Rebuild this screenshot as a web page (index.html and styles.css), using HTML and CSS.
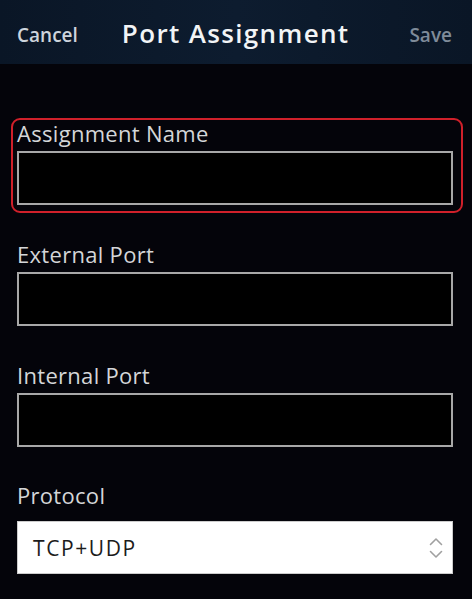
FILE: index.html
```html
<!DOCTYPE html>
<html>
<head>
<meta charset="utf-8">
<link rel="stylesheet" href="styles.css">
</head>
<body>
<header class="topbar">
  <span class="nav-btn cancel">Cancel</span>
  <h1 class="title">Port Assignment</h1>
  <span class="nav-btn save">Save</span>
</header>
<main class="form">
  <div class="field field-focus">
    <label class="label">Assignment Name</label>
    <div class="input"></div>
  </div>
  <div class="field">
    <label class="label">External Port</label>
    <div class="input"></div>
  </div>
  <div class="field">
    <label class="label">Internal Port</label>
    <div class="input"></div>
  </div>
  <div class="field field-select">
    <label class="label">Protocol</label>
    <div class="select">
      <span class="select-value">TCP+UDP</span>
      <svg class="chevrons" width="14" height="24" viewBox="0 0 14 24">
        <path d="M1.5 8.5 L7 3 L12.5 8.5" fill="none" stroke="#a0a0a0" stroke-width="1.6" stroke-linecap="round" stroke-linejoin="round"/>
        <path d="M1.5 15.5 L7 21 L12.5 15.5" fill="none" stroke="#a0a0a0" stroke-width="1.6" stroke-linecap="round" stroke-linejoin="round"/>
      </svg>
    </div>
  </div>
</main>
</body>
</html>
```

FILE: styles.css
```css
html, body {
  margin: 0;
  padding: 0;
  background: #04040a;
  font-family: "Open Sans", "Liberation Sans", sans-serif;
  width: 472px;
  height: 599px;
  overflow: hidden;
}
.topbar {
  height: 64px;
  background: linear-gradient(90deg, #0a1626 0%, #0d1c2f 50%, #0a1626 100%);
  display: flex;
  align-items: center;
  padding: 0 20px 0 17px;
  box-sizing: border-box;
}
.nav-btn {
  font-size: 19px;
  font-weight: 600;
  padding-top: 5px;
}
.cancel {
  color: #cdd4dc;
}
.save {
  color: #7f8b99;
  margin-left: auto;
}
.title {
  margin: 0 0 0 44px;
  font-size: 26px;
  font-weight: 600;
  color: #f2f4f6;
  letter-spacing: 1.35px;
  padding-top: 1px;
}
.form {
  display: flex;
  flex-direction: column;
  padding: 56px 19px 0 17px;
}
.field {
  display: flex;
  flex-direction: column;
  position: relative;
  margin-bottom: 36px;
}
.field-focus::before {
  content: "";
  position: absolute;
  left: -6px;
  right: -10px;
  top: -2px;
  bottom: -8px;
  border: 2px solid #d0202a;
  border-radius: 9px;
}
.label {
  color: #d4d6d8;
  font-size: 22px;
  line-height: 26px;
  margin-bottom: 5px;
  letter-spacing: 0.3px;
}
.input {
  height: 54px;
  border: 2px solid #a8a8a8;
  background: #000;
  box-sizing: border-box;
}
.field-select {
  margin-top: -1px;
}
.field-select .label {
  margin-bottom: 13px;
}
.select {
  height: 53px;
  background: #fff;
  border: 1px solid #ccc;
  box-sizing: border-box;
  display: flex;
  align-items: center;
  padding: 0 9px 0 15px;
}
.select-value {
  font-size: 21px;
  letter-spacing: 1.6px;
  color: #1c1c1c;
  padding-top: 1px;
}
.chevrons {
  margin-left: auto;
}
```
